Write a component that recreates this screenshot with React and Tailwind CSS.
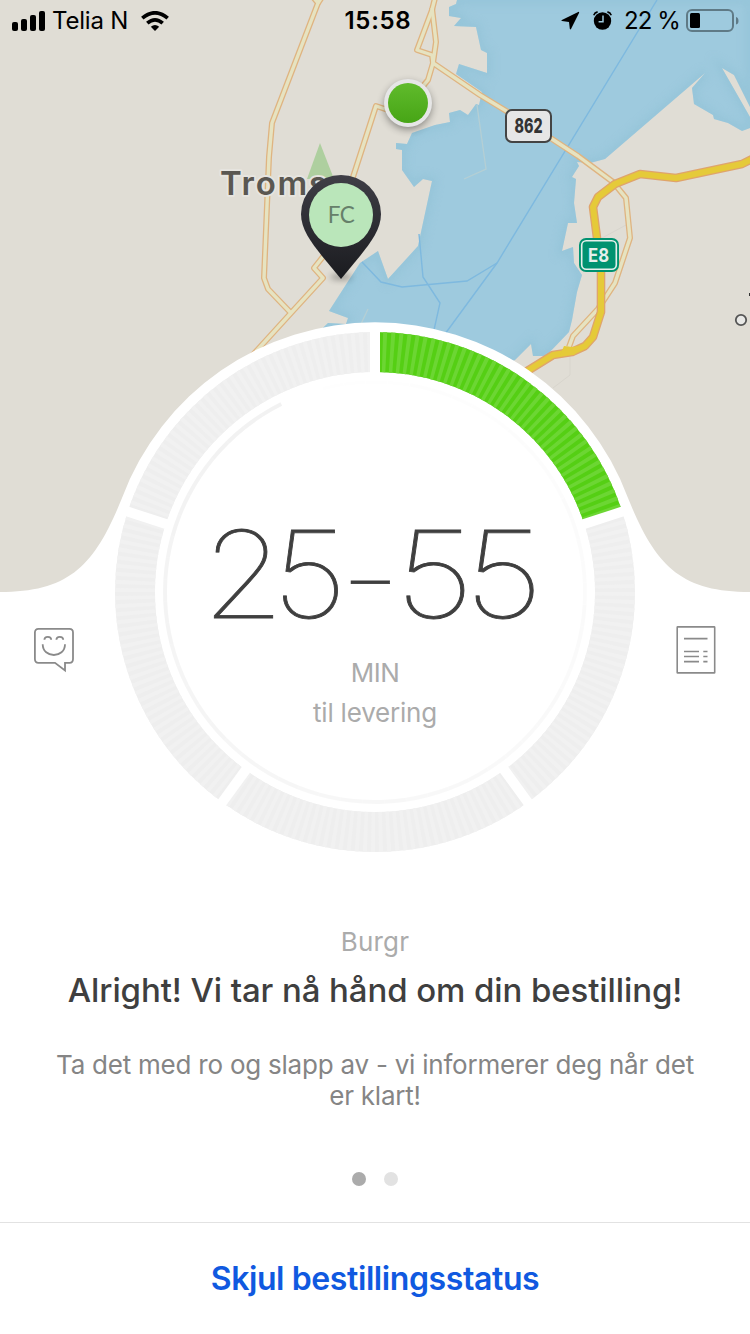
import React from "react";

const CX = 375;
const CY = 592;

const WATER =
  "M457 0 L456 4 L449 7 L449 16 L461 18 L454 26 L476 27 L481 50 L487 53 L487 73 L459 64 L456 74 L482 92 L479 105 L476 104 L468 115 L460 110 L449 113 L450 122 L435 125 L412 133 L407 144 L396 143 L396 149 L402 150 L402 170 L414 187 L423 179 L432 181 L418 246 L388 279 L378 251 L360 263 L347 283 L329 311 L348 318 L346 324 L328 323 L310 340 L400 400 L515 360 L531 344 L533 356 L546 356 L569 332 L572 320 L577 292 L582 275 L574 263 L573 247 L562 251 L568 223 L577 223 L574 203 L576 179 L572 177 L579 166 L577 162 L590 163 L605 159 L705 73 L692 88 L694 104 L713 115 L714 119 L728 123 L742 131 L750 128 L750 117 L722 68 L734 75 L750 107 L750 0 Z";

const MINOR_ROADS = [
  "M313 -3 L318 3 L272 123 L269 157 L264 278 L268 289 L291 313",
  "M322 -3 L318 3",
  "M240 369 L291 313 L323 278 L314 268 L330 248 L353 177 L376 106 L400 114 L428 80 L433 63 L432 55 L417 50 L432 10 L435 -2",
  "M432 8 L436 42 L433 63 L480 95 L552 139 L578 156 L613 182 L626 198 L630 238 L615 283 L598 309 L573 336 L569 347",
];

const MAIN_ROAD =
  "M754 158 L742 164 L676 178 L640 174 L615 184 L598 197 L593 207 L597 238 L601 272 L601 312 L593 337 L585 346 L572 352 L553 355 L524 373";

const FERRY_LINES = [
  "M657 0 L497 263 L445 334",
  "M362 262 L381 282 L402 287 L467 281 L497 263",
  "M419 234 L423 277 L440 303 L434 330",
];

const point = (deg, r) => {
  const a = ((deg - 90) * Math.PI) / 180;
  return `${CX + r * Math.cos(a)} ${CY + r * Math.sin(a)}`;
};

const arc = (from, to, r) =>
  `M${point(from, r)} A${r} ${r} 0 0 1 ${point(to, r)}`;

const MapView = () => (
  <svg
    className="absolute left-0 top-0"
    width="750"
    height="600"
    viewBox="0 0 750 600"
    fontFamily="Inter, sans-serif"
  >
    <defs>
      <clipPath id="water">
        <path d={WATER} />
      </clipPath>
      <filter id="blur" x="-50%" y="-50%" width="200%" height="200%">
        <feGaussianBlur stdDeviation="4" />
      </filter>
      <filter id="shadow" x="-100%" y="-300%" width="300%" height="700%">
        <feGaussianBlur stdDeviation="3" />
      </filter>
      <linearGradient id="pin" x1="0" y1="0" x2="0" y2="1">
        <stop offset="0" stopColor="#3f3e46" />
        <stop offset="1" stopColor="#1a1b1f" />
      </linearGradient>
      <linearGradient id="dot" x1="0" y1="0" x2="0" y2="1">
        <stop offset="0" stopColor="#60bb2c" />
        <stop offset="1" stopColor="#47a516" />
      </linearGradient>
    </defs>

    <rect width="750" height="600" fill="#e0ddd5" />
    <path d={WATER} fill="#9ecade" />
    <g clipPath="url(#water)">
      <path d={WATER} fill="none" stroke="#8dc0d4" strokeWidth="8" opacity="0.5" filter="url(#blur)" />
    </g>
    <path d="M477 105 L486 169 L464 179" fill="none" stroke="#b5cfd4" strokeWidth="1.3" />
    <path d="M368 309 L361 324" fill="none" stroke="#b5cfd4" strokeWidth="1.3" />
    <path d="M320 143 L307 179 L334 179 Z" fill="#aecf9f" />
    <path d="M602 238 L626 225 M570 352 V375 L553 388" fill="none" stroke="#d8d5cd" strokeWidth="1" />

    {FERRY_LINES.map((d) => (
      <path key={d} d={d} fill="none" stroke="#7eb9df" strokeWidth="1.4" />
    ))}
    {MINOR_ROADS.map((d) => (
      <path key={d} d={d} fill="none" stroke="#dfb481" strokeWidth="6" strokeLinejoin="round" />
    ))}
    {MINOR_ROADS.map((d) => (
      <path key={d} d={d} fill="none" stroke="#e6e3c1" strokeWidth="3.4" strokeLinejoin="round" />
    ))}
    <path d={MAIN_ROAD} fill="none" stroke="#dfa46c" strokeWidth="8.6" strokeLinejoin="round" />
    <path d={MAIN_ROAD} fill="none" stroke="#e5ca39" strokeWidth="6" strokeLinejoin="round" />
    <path d="M564 346 L572 347 L584 345 L574 355 L560 355 Z" fill="#e5ca39" />

    {/* road signs */}
    <rect x="506" y="110" width="45" height="32" rx="6" fill="#e6e6e6" stroke="#444" strokeWidth="2" />
    <text x="528.5" y="133" textAnchor="middle" textLength="28" lengthAdjust="spacingAndGlyphs" fontSize="19.5" fontWeight="800" fill="#333">
      862
    </text>
    <rect x="579" y="238" width="40" height="34" rx="7" fill="#009270" />
    <rect x="581.7" y="240.7" width="34.6" height="28.6" rx="4.5" fill="none" stroke="#e6efec" strokeWidth="1.6" />
    <text x="598.5" y="262" textAnchor="middle" textLength="21" lengthAdjust="spacingAndGlyphs" fontSize="19" fontWeight="700" fill="#e6efec">
      E8
    </text>
    <circle cx="741" cy="320" r="5.2" fill="#e8e8e6" stroke="#555" strokeWidth="1.8" />
    <rect x="749" y="293" width="1" height="3" fill="#333" />

    <text
      x="220"
      y="195"
      fontSize="33"
      fontWeight="600"
      letterSpacing="1.7"
      fill="#5a5751"
      stroke="#e6e4df"
      strokeWidth="4"
      strokeLinejoin="round"
      paintOrder="stroke"
    >
      Tromsø
    </text>

    {/* courier */}
    <circle cx="408" cy="106" r="23" fill="#000" opacity="0.45" filter="url(#blur)" />
    <circle cx="408" cy="103" r="24" fill="#e6e6e6" />
    <circle cx="408" cy="103" r="20" fill="url(#dot)" />

    {/* destination pin */}
    <ellipse cx="341" cy="277" rx="11" ry="2.5" fill="#000" opacity="0.4" filter="url(#shadow)" />
    <path
      d="M341 279 L322 256 C311 242 301 229 301 214 A40 39 0 0 1 381 214 C381 229 371 242 360 256 Z"
      fill="url(#pin)"
    />
    <circle cx="341" cy="215" r="32" fill="#bae6ba" />
    <text x="341.3" y="223" textAnchor="middle" fontFamily="Lato, sans-serif" fontSize="22.5" textLength="27" fill="#66806a">
      FC
    </text>

    {/* white sheet with the bump around the ring */}
    <path
      d="M0 600 V592 C70 592 95 565 122 498 A270 270 0 0 1 628 498 C655 565 680 592 750 592 V600 Z"
      fill="#fff"
    />
  </svg>
);

const StatusBar = () => (
  <div className="relative flex h-[41px] w-full items-center text-black">
    <svg className="ml-3" width="33" height="20" viewBox="0 0 33 20">
      <rect x="0" y="11" width="6" height="9" rx="2" />
      <rect x="9" y="8" width="6" height="12" rx="2" />
      <rect x="18" y="4" width="6" height="16" rx="2" />
      <rect x="27" y="0" width="6" height="20" rx="2" />
    </svg>
    <span className="ml-[7px] w-[77px] whitespace-nowrap pt-px text-[24px] leading-10 tracking-[-0.2px]">Telia N</span>
    <svg className="ml-3" width="28" height="20" viewBox="0 0 28 20">
      <path d="M14 20 L9.8 15.8 Q14 12.4 18.2 15.8 Z" />
      <path d="M6.3 12.2 Q14 5.6 21.7 12.2" fill="none" stroke="#000" strokeWidth="3.7" />
      <path d="M1.3 7.2 Q14 -3.6 26.7 7.2" fill="none" stroke="#000" strokeWidth="3.7" />
    </svg>
    <span className="ml-[175.5px] w-[68px] whitespace-nowrap pt-px text-[24px] font-semibold leading-10 tracking-[0.7px]">
      15:58
    </span>
    <svg className="ml-[148.5px]" width="19" height="19" viewBox="0 0 19 19">
      <path d="M17.2 0.9 Q18.6 0.4 18 1.9 L10 18 Q9.2 19 8.8 17.8 L8 11 L1 10 Q-0.2 9.6 0.9 8.9 Z" />
    </svg>
    <svg className="ml-[13px]" width="19" height="19" viewBox="0 0 19 19">
      <circle cx="9.5" cy="10" r="8.7" />
      <path d="M0.7 4.3 Q1.6 1.6 4.6 0.9 M18.3 4.3 Q17.4 1.6 14.4 0.9" fill="none" stroke="#000" strokeWidth="1.6" />
      <path d="M10 4.5 V10.8 H5.6" fill="none" stroke="#9ecade" strokeWidth="1.5" />
    </svg>
    <span className="ml-[12px] w-[56px] whitespace-nowrap pt-px text-[24px] leading-10 tracking-[-0.9px]">22 %</span>
    <svg className="ml-[6px]" width="54" height="24" viewBox="0 0 54 24">
      <rect x="1" y="1" width="46" height="21" rx="5" fill="none" stroke="#5f7a86" strokeWidth="2" />
      <rect x="4" y="4" width="10" height="15" rx="1.5" />
      <path d="M50 8 Q52.5 8.5 52.5 12 Q52.5 15 50 15.5 Z" fill="#5f7a86" />
    </svg>
  </div>
);

const Ring = () => {
  // hairline spinner: strongest at its head, fading counter-clockwise
  const head = 333.5;
  const parts = Array.from({ length: 60 }, (_, i) => i);
  return (
    <svg className="absolute inset-0" width="520" height="520" viewBox="115 332 520 520">
      <circle cx={CX} cy={CY} r="240" fill="none" stroke="#eeeeee" strokeWidth="40" />
      <circle
        cx={CX}
        cy={CY}
        r="240"
        fill="none"
        stroke="#f1f1f1"
        strokeWidth="40"
        pathLength="400"
        strokeDasharray="1 1"
        transform={`rotate(-90 ${CX} ${CY})`}
      />
      <path d={arc(0, 72, 240)} fill="none" stroke="#55cf14" strokeWidth="40" />
      <path
        d={arc(0, 72, 240)}
        fill="none"
        stroke="#6cd633"
        strokeWidth="40"
        pathLength="80"
        strokeDasharray="1 1"
      />
      {[0, 72, 144, 216, 288].map((deg) => (
        <line
          key={deg}
          x1={CX}
          y1={CY - 215}
          x2={CX}
          y2={CY - 265}
          stroke="#fff"
          strokeWidth="10"
          transform={`rotate(${deg} ${CX} ${CY})`}
        />
      ))}
      {parts.map((i) => (
        <path
          key={i}
          d={arc(head - (i + 1) * 6, head - i * 6, 210)}
          fill="none"
          stroke="#000"
          strokeOpacity={0.052 * (1 - i / 60)}
          strokeWidth="4"
        />
      ))}
    </svg>
  );
};

const FeedbackIcon = () => (
  <svg width="42" height="46" viewBox="0 0 42 46" fill="none" stroke="#8a8a8a" strokeWidth="1.8">
    <path d="M5.5 1.9 H36.5 Q40 1.9 40 5.5 V32 Q40 35.8 36.5 35.8 H32 V43.5 L22 35.8 H5.5 Q1.9 35.8 1.9 32 V5.5 Q1.9 1.9 5.5 1.9 Z" />
    <path d="M11.4 12.8 Q11.4 9.8 14.8 9.8 Q18.2 9.8 18.2 12.8 M23.4 12.8 Q23.4 9.8 26.8 9.8 Q30.2 9.8 30.2 12.8" />
    <path d="M9.7 17.2 C9.7 31.6 32 31.6 32 17.2" />
  </svg>
);

const ReceiptIcon = () => (
  <svg width="40" height="48" viewBox="0 0 40 48" fill="none" stroke="#8a8a8a" strokeWidth="1.6">
    <rect x="1.2" y="0.9" width="37.5" height="46" rx="0.5" />
    <path d="M8 12.6 H31.5 M8 25.5 H23 M8 30.5 H23 M8 35.6 H23" />
    <path d="M27.3 25.5 H31.5 M27.3 30.5 H31.5 M27.3 35.6 H31.5" />
  </svg>
);

export default function App() {
  return (
    <div className="relative flex h-[1334px] w-[750px] flex-col overflow-hidden bg-white font-['Inter',sans-serif]">
      <MapView />
      <StatusBar />

      <div className="relative mt-[291px] grid grid-cols-[115px_520px_115px]">
        <button className="mt-[295px] ml-[33px] h-[46px] w-[42px]">
          <FeedbackIcon />
        </button>
        <div className="relative flex h-[520px] flex-col items-center">
          <Ring />
          {/* wide geometric digits with a short dash */}
          <div className="relative mt-[166px] h-[155px] w-[340px] whitespace-nowrap text-[121px] font-thin leading-[153px] text-[#3f3f3f] [-webkit-text-stroke:0.8px_#3f3f3f]">
            <span className="-ml-[3px] inline-block w-[149px] origin-left scale-x-[1.1] tracking-[-11.4px]">25</span>
            <span className="inline-block w-[44px] origin-left translate-y-[2px] scale-x-[0.64]">–</span>
            <span className="inline-block w-[145px] origin-left scale-x-[1.16] tracking-[-8.4px]">55</span>
          </div>
          <div className="relative text-[26px] leading-10 tracking-[-0.5px] text-[#ababab]">MIN</div>
          <div className="relative text-[26px] leading-10 tracking-[-0.2px] text-[#ababab]">til levering</div>
        </div>
        <button className="mt-[294px] ml-[41px] h-12 w-10">
          <ReceiptIcon />
        </button>
      </div>

      <div className="mt-[74px] text-center text-[26px] leading-8 tracking-[0.2px] text-[#ababab]">Burgr</div>
      <h1 className="mt-3 text-center text-[33px] font-medium leading-10 tracking-[-0.1px] whitespace-nowrap text-[#3f3f3f]">
        Alright! Vi tar nå hånd om din bestilling!
      </h1>
      <p className="mt-[39px] text-center text-[26px] leading-[31px] tracking-[-0.23px] text-[#858585]">
        Ta det med ro og slapp av - vi informerer deg når det
        <br />
        er klart!
      </p>

      <div className="mt-[61px] flex justify-center gap-[18px]">
        <span className="h-[14px] w-[14px] rounded-full bg-[#ababab]"></span>
        <span className="h-[14px] w-[14px] rounded-full bg-[#e2e2e2]"></span>
      </div>

      <button className="mt-9 flex-1 border-t border-[#e2e2e2] text-[32px] font-semibold tracking-[-0.4px] text-[#1059e0]">
        Skjul bestillingsstatus
      </button>
    </div>
  );
}
